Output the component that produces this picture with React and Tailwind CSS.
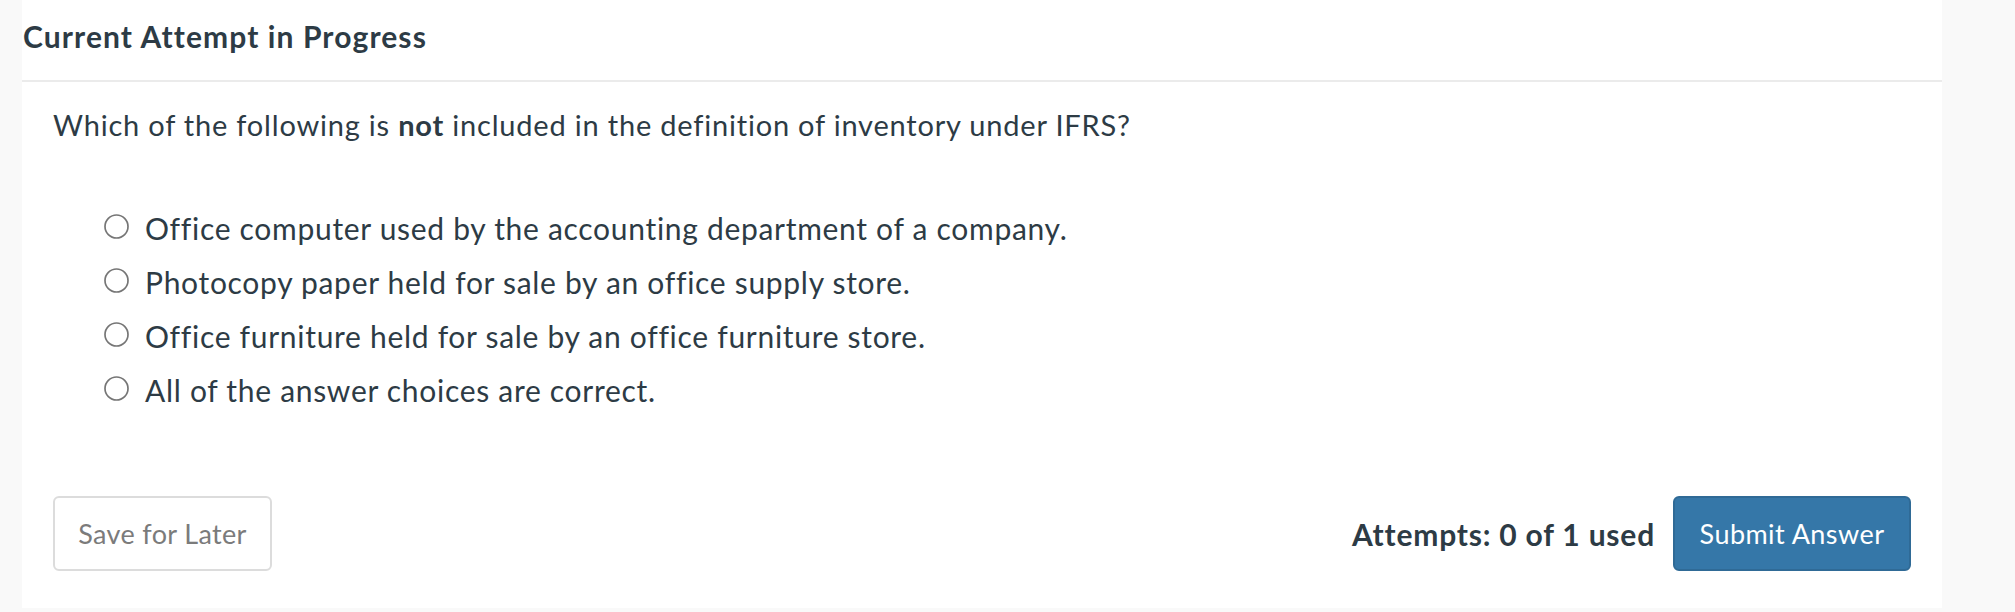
import React from "react";

const options = [
  "Office computer used by the accounting department of a company.",
  "Photocopy paper held for sale by an office supply store.",
  "Office furniture held for sale by an office furniture store.",
  "All of the answer choices are correct.",
];

function Radio() {
  return (
    <svg width="25" height="25" viewBox="0 0 25 25" className="shrink-0 mb-[4px]">
      <circle cx="12.5" cy="12.5" r="11.5" fill="white" stroke="#767676" strokeWidth="1.7" />
    </svg>
  );
}

export default function App() {
  return (
    <div
      className="w-[2015px] h-[612px] bg-[#f9f9f9] text-[#2d3b45]"
      style={{ fontFamily: "Lato, 'Open Sans', sans-serif" }}
    >
      <div className="ml-[22px] w-[1920px] h-[608px] bg-white flex flex-col">
        <div className="h-[82px] border-b-2 border-[#ebebeb] pt-[19px] pl-[1px]">
          <h2 className="text-[30px] leading-[34px] font-bold tracking-[1.1px]">Current Attempt in Progress</h2>
        </div>
        <div className="px-[31px] flex flex-col">
          <p className="mt-[26px] text-[29px] leading-[34px] tracking-[0.8px]">
            Which of the following is <span className="font-bold">not</span> included in the definition of inventory under IFRS?
          </p>
          <ul className="mt-[59px] ml-[51px] flex flex-col">
            {options.map((o) => (
              <li key={o} className="h-[54px] flex items-center gap-[16px]">
                <Radio />
                <span className="text-[30px] leading-[34px] tracking-[0.7px]">{o}</span>
              </li>
            ))}
          </ul>
          <div className="mt-[79px] flex items-center justify-between">
            <button className="w-[219px] h-[75px] pt-[2px] border-2 border-[#dcdcdc] rounded-[6px] bg-white text-[#7b7b7b] text-[27px] tracking-[0.35px]">
              Save for Later
            </button>
            <div className="flex items-center gap-[18px]">
              <span className="pt-[2px] text-[30px] font-bold tracking-[0.8px]">Attempts: 0 of 1 used</span>
              <button className="w-[238px] h-[75px] pt-[2px] border-2 border-[#2f6a96] rounded-[6px] bg-[#3577a8] text-white text-[27px] tracking-[0.45px]">
                Submit Answer
              </button>
            </div>
          </div>
        </div>
      </div>
    </div>
  );
}
